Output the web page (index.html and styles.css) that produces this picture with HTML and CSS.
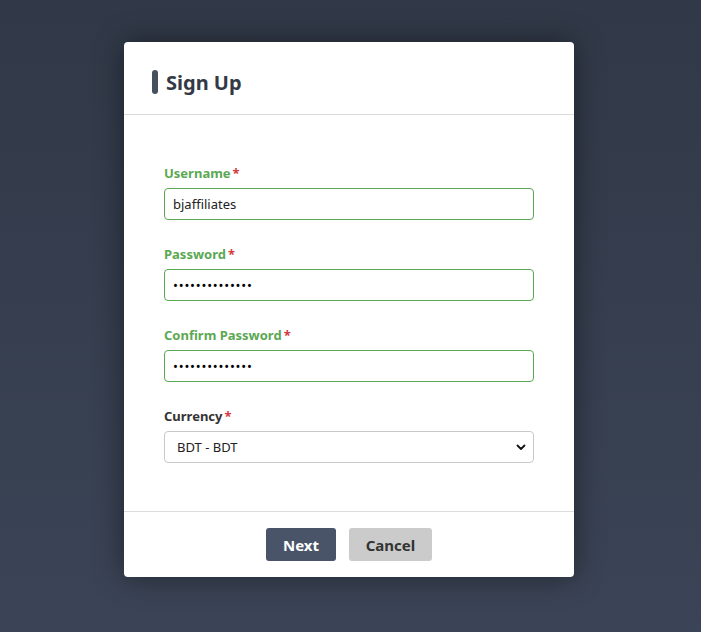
FILE: index.html
```html
<!DOCTYPE html>
<html lang="en">
<head>
    <meta charset="UTF-8">
    <meta name="viewport" content="width=device-width, initial-scale=1.0">
    <title>Sign Up</title>
    <link rel="stylesheet" href="styles.css">
</head>
<body>
    <div class="modal">
        <div class="modal-header">
            <span class="title-bar"></span>
            <h2 class="modal-title">Sign Up</h2>
        </div>

        <form class="modal-body">
            <div class="field valid">
                <label for="username">Username<span class="req">*</span></label>
                <input type="text" id="username" value="bjaffiliates">
            </div>
            <div class="field valid">
                <label for="password">Password<span class="req">*</span></label>
                <input type="password" id="password" value="bjaffiliates12">
            </div>
            <div class="field valid">
                <label for="confirm">Confirm Password<span class="req">*</span></label>
                <input type="password" id="confirm" value="bjaffiliates12">
            </div>
            <div class="field">
                <label for="currency">Currency<span class="req">*</span></label>
                <div class="select-wrap">
                    <select id="currency">
                        <option>BDT - BDT</option>
                    </select>
                    <svg class="chevron" width="10" height="7" viewBox="0 0 10 7">
                        <path d="M1.5 1.5 L5 5 L8.5 1.5" fill="none" stroke="#111" stroke-width="1.8" stroke-linecap="round" stroke-linejoin="round"/>
                    </svg>
                </div>
            </div>
        </form>

        <div class="modal-footer">
            <button class="btn btn-primary" type="button">Next</button>
            <button class="btn btn-cancel" type="button">Cancel</button>
        </div>
    </div>
</body>
</html>
```

FILE: styles.css
```css
html, body {
    height: 100%;
}

body {
    margin: 0;
    background: linear-gradient(180deg, #313948 0%, #3b4456 100%);
    font-family: "Noto Sans", "Open Sans", sans-serif;
    color: #333;
    overflow: hidden;
}

.modal {
    width: 450px;
    margin: 42px 0 0 124px;
    background: white;
    border-radius: 4px;
    box-shadow: 0 0 30px rgba(0,0,0,0.45);
}

.modal-header {
    box-sizing: border-box;
    height: 73px;
    padding: 8px 0 0 28px;
    display: flex;
    align-items: center;
    gap: 8px;
    border-bottom: 1px solid #dcdcdc;
}

.title-bar {
    width: 6px;
    height: 24px;
    border-radius: 3px;
    background: #46505f;
}

.modal-title {
    margin: 0;
    font-size: 20px;
    font-weight: 700;
    color: #333a45;
}

.modal-body {
    padding: 50px 40px 48px;
    display: flex;
    flex-direction: column;
    gap: 26px;
    margin: 0;
}

.field {
    display: flex;
    flex-direction: column;
    gap: 7px;
}

.field label {
    font-size: 13px;
    line-height: 16px;
    font-weight: 700;
    color: #333;
}

.field.valid label {
    color: #5ba853;
}

.req {
    color: #d43a3e;
    margin-left: 2px;
}

.field input,
.field select {
    box-sizing: border-box;
    width: 100%;
    height: 32px;
    margin: 0;
    border: 1px solid #c8c8c8;
    border-radius: 4px;
    background: white;
    font-family: "Noto Sans", "Open Sans", sans-serif;
    font-size: 13px;
    color: #222;
    outline: none;
}

.field input {
    padding: 0 8px;
}

.field input[type="password"] {
    letter-spacing: 0.8px;
    color: #000;
}

.field.valid input {
    border-color: #5ba853;
}

.select-wrap {
    position: relative;
}

.field select {
    -webkit-appearance: none;
    appearance: none;
    padding: 0 12px;
}

.chevron {
    position: absolute;
    right: 8px;
    top: 13px;
    pointer-events: none;
}

.modal-footer {
    border-top: 1px solid #dcdcdc;
    padding: 16px 0 16px;
    display: flex;
    justify-content: center;
    gap: 13px;
}

.btn {
    height: 33px;
    border: none;
    border-radius: 3px;
    font-family: "Noto Sans", "Open Sans", sans-serif;
    font-size: 15px;
    font-weight: 700;
    cursor: pointer;
}

.btn-primary {
    width: 70px;
    background: #4a5468;
    color: white;
}

.btn-cancel {
    width: 83px;
    background: #cbcbcb;
    color: #333;
}
```
